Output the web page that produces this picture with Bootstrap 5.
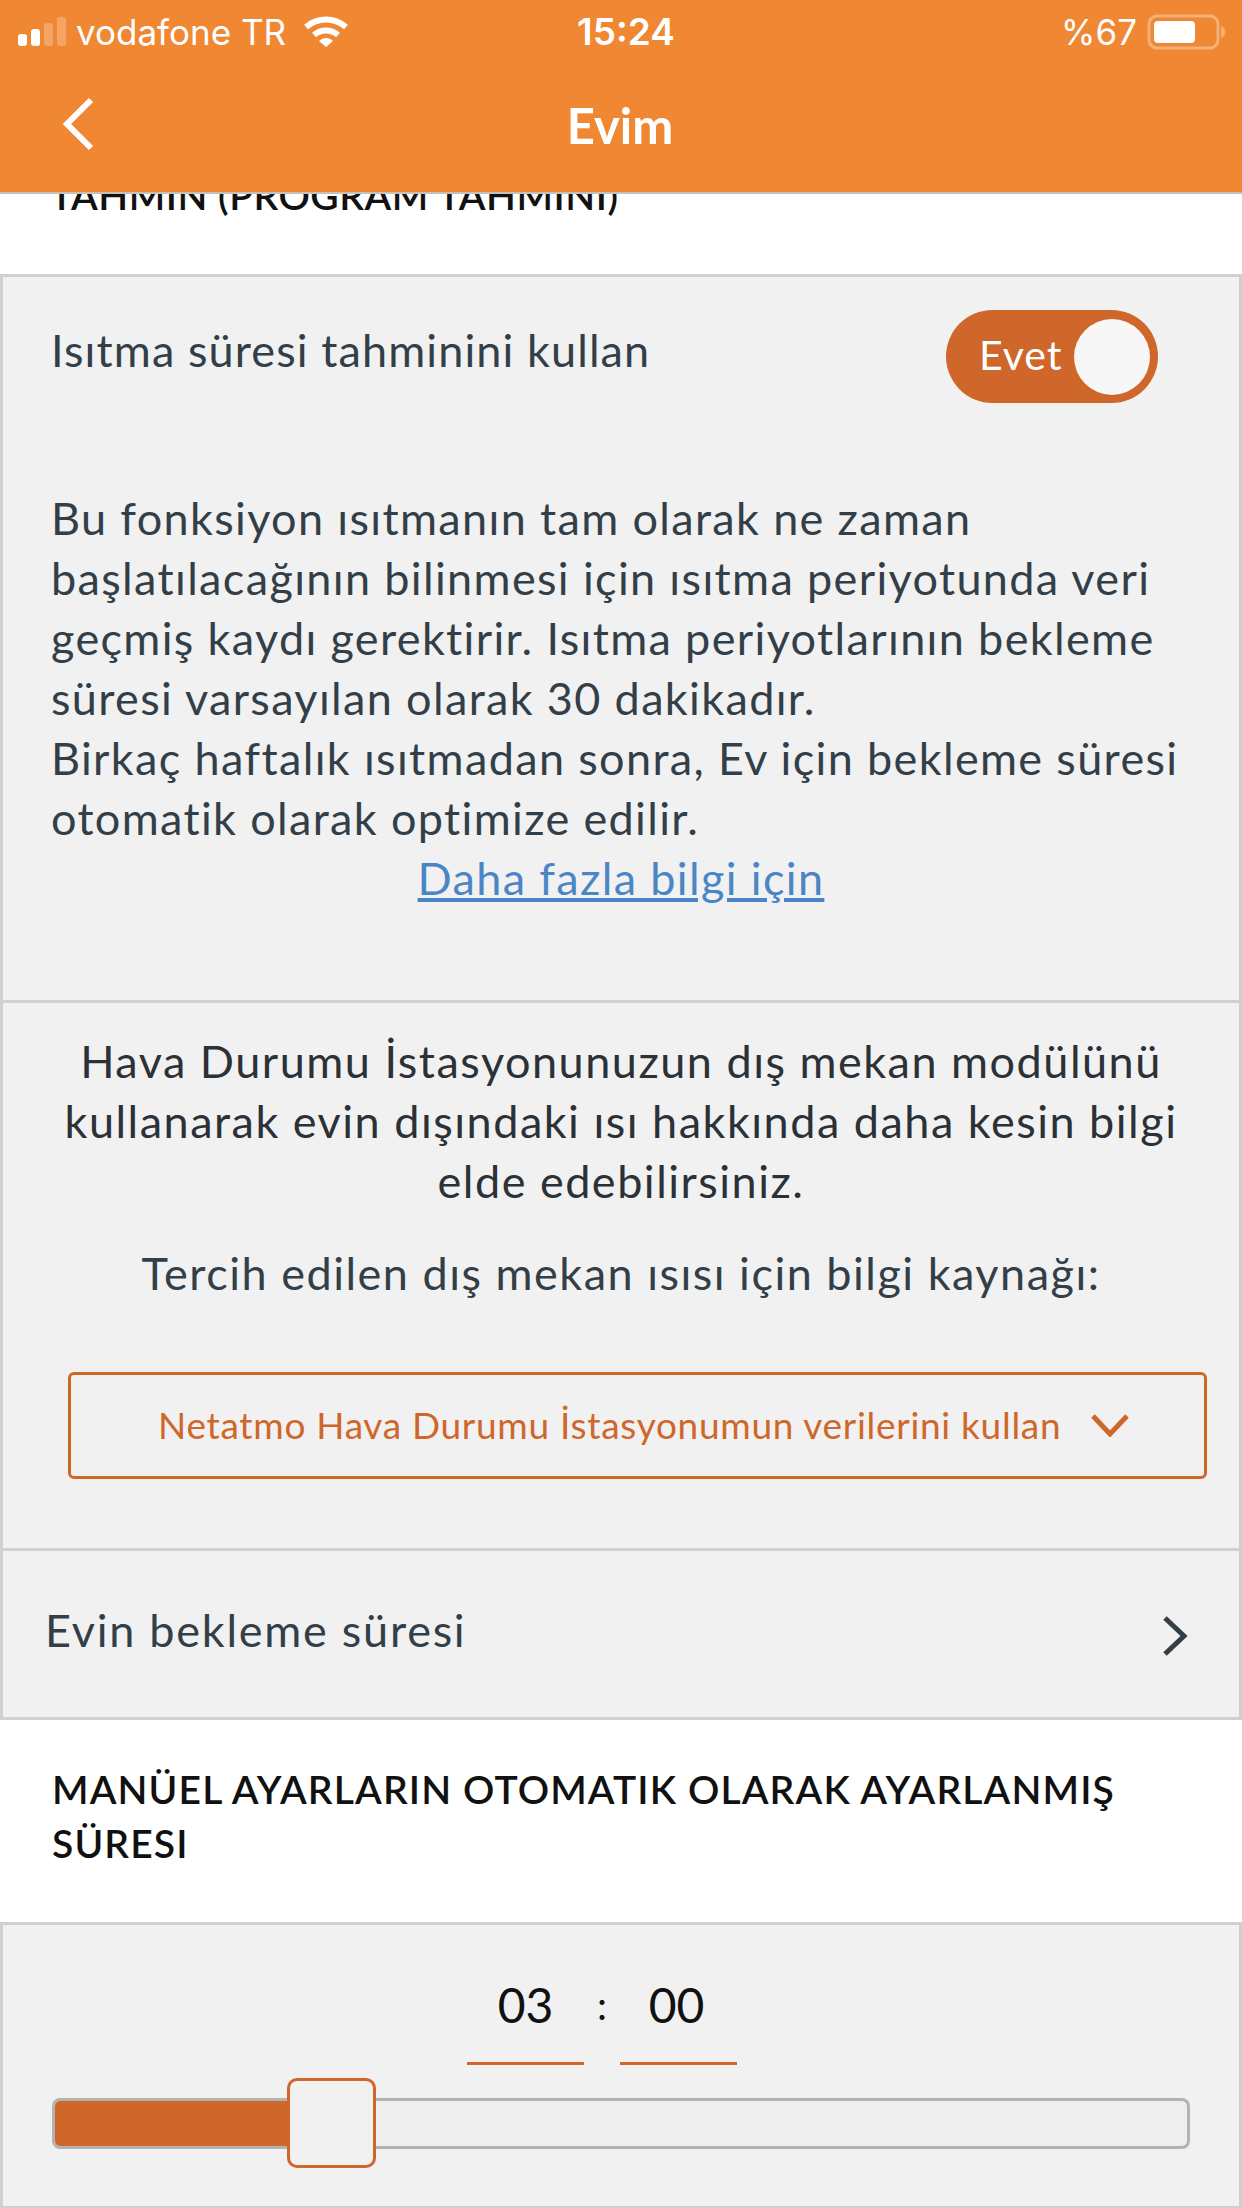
<!DOCTYPE html>
<html lang="tr">
<head>
  <meta charset="UTF-8">
  <title>Evim</title>
  <link href="https://cdn.jsdelivr.net/npm/bootstrap@5.3.2/dist/css/bootstrap.min.css" rel="stylesheet">
  <style>
    html, body { height: 2208px; overflow: hidden; }
    body { font-family: "Lato", "Liberation Sans", sans-serif; color: #333f48; background: #fff; }

    .app-top { position: relative; z-index: 2; height: 194px; background: #f08733; border-bottom: 2px solid #c4c0bc; color: #fff; }
    .status-row { height: 64px; padding: 0 15px 0 18px; font-family: "Inter", sans-serif; font-size: 35px; }
    .status-side { width: 500px; gap: 10px; }
    .status-clock { font-size: 37px; font-weight: 600; margin-left: 7px; }
    .title-row { height: 128px; padding: 0 0 8px 62px; }
    .title-text { position: absolute; left: 0; right: 2px; padding-top: 4px; text-align: center; font-size: 49px; font-weight: 700; }

    .cut-head { height: 104px; margin-top: -26px; margin-bottom: 2px; padding-left: 50px; font-size: 39px; letter-spacing: .5px; font-weight: 600; color: #111; line-height: 54px; }
    .section-head { height: 202px; padding: 42px 52px 0; font-size: 39px; letter-spacing: 1.12px; font-weight: 600; color: #111; line-height: 54px; }

    .panel-box { background: #f1f1f1; border: 3px solid #d0d0d0; font-size: 45px; letter-spacing: 1.35px; line-height: 60px; }
    .panel-first { height: 729px; padding: 0 48px; }
    .panel-second { height: 551px; margin-top: -3px; padding: 28px 0 0; letter-spacing: 1.5px; }
    .panel-third { height: 172px; margin-top: -3px; padding: 0 50px 0 42px; letter-spacing: 1.75px; }
    .panel-fourth { height: 287px; }

    .switch-row { height: 130px; padding-top: 33px; margin-bottom: 81px; padding-right: 33px; }
    .switch-label { padding-top: 10px; letter-spacing: 1.1px; }
    .switch-pill { width: 212px; height: 93px; border-radius: 47px; background: #d0672a; color: #fff; padding: 0 8px 0 33px; font-size: 41px; letter-spacing: 1px; }
    .switch-word { padding-bottom: 4px; }
    .switch-knob { width: 76px; height: 76px; border-radius: 50%; background: #f7f7f7; }
    .more-link { color: #4a86c5; }
    .dark-text { color: #2b3136; padding: 0 30px; }
    .source-label { margin-top: 32px; }

    .source-select { height: 107px; margin: 69px 32px 0 65px; border: 3px solid #d0672a; border-radius: 6px; color: #d0672a; font-size: 37px; letter-spacing: .7px; padding: 0 75px 2px 87px; }

    .time-row { height: 140px; padding: 48px 38px 0 0; font-size: 48px; letter-spacing: 0; line-height: 64px; color: #111; gap: 13px; }
    .time-cell { width: 117px; height: 92px; border-bottom: 3px solid #d0672a; text-align: center; }
    .time-cell-right { padding-right: 4px; }
    .time-sep { width: 10px; text-align: center; font-size: 40px; }

    .slide-wrap { position: relative; height: 51px; margin: 33px 49px 0; }
    .slide-track { height: 51px; border: 3px solid #b3b3b3; border-radius: 8px; background: #eee; overflow: hidden; }
    .slide-fill { height: 100%; background: #d0672a; }
    .slide-thumb { position: absolute; left: 235px; top: -20px; width: 89px; height: 90px; background: #f1f1f1; border: 3px solid #d0672a; border-radius: 10px; }
  </style>
</head>
<body>

<!-- Top bar -->
<div class="app-top">
  <div class="status-row d-flex align-items-center justify-content-between">
    <div class="status-side d-flex align-items-center">
      <svg width="48" height="30" viewBox="0 0 48 30">
        <rect x="0" y="17" width="9" height="12" rx="3" fill="#fff"/>
        <rect x="13" y="12" width="9" height="17" rx="3" fill="#fff"/>
        <rect x="26" y="6" width="9" height="23" rx="3" fill="#fff" fill-opacity=".25"/>
        <rect x="39" y="0" width="9" height="29" rx="3" fill="#fff" fill-opacity=".25"/>
      </svg>
      <span>vodafone TR</span>
      <svg class="ms-2" width="44" height="32" viewBox="0 0 44 32" fill="none" stroke="#fff" stroke-width="6">
        <path d="M2 11C14 1 30 1 42 11"/>
        <path d="M10 19C17 13 27 13 34 19"/>
        <path d="M15 25L22 31L29 25C25 21 19 21 15 25Z" fill="#fff" stroke="none"/>
      </svg>
    </div>
    <div class="status-clock">15:24</div>
    <div class="status-side d-flex align-items-center justify-content-end">
      <span>%67</span>
      <svg width="80" height="36" viewBox="0 0 80 36">
        <rect x="2" y="2" width="69" height="32" rx="8" fill="none" stroke="#fff" stroke-opacity=".35" stroke-width="3"/>
        <rect x="7" y="7" width="41" height="22" rx="4" fill="#fff"/>
        <path d="M74 12C77 13 78 15 78 18C78 21 77 23 74 24Z" fill="#fff" fill-opacity=".35"/>
      </svg>
    </div>
  </div>
  <div class="title-row d-flex align-items-center">
    <svg width="32" height="54" viewBox="0 0 32 54" fill="none" stroke="#fff" stroke-width="6"><path d="M29 3L5 27L29 51"/></svg>
    <div class="title-text">Evim</div>
  </div>
</div>

<div class="cut-head">TAHMIN (PROGRAM TAHMINI)</div>

<!-- Heating time estimate -->
<div class="panel-box panel-first">
  <div class="switch-row d-flex justify-content-between">
    <div class="switch-label">Isıtma süresi tahminini kullan</div>
    <div class="switch-pill d-flex align-items-center justify-content-between">
      <span class="switch-word">Evet</span>
      <span class="switch-knob"></span>
    </div>
  </div>
  <div>Bu fonksiyon ısıtmanın tam olarak ne zaman başlatılacağının bilinmesi için ısıtma periyotunda veri geçmiş kaydı gerektirir. Isıtma periyotlarının bekleme süresi varsayılan olarak 30 dakikadır.<br>Birkaç haftalık ısıtmadan sonra, Ev için bekleme süresi otomatik olarak optimize edilir.</div>
  <div class="text-center"><a class="more-link" href="#">Daha fazla bilgi için</a></div>
</div>

<!-- Outdoor source -->
<div class="panel-box panel-second text-center">
  <div class="dark-text">Hava Durumu İstasyonunuzun dış mekan modülünü kullanarak evin dışındaki ısı hakkında daha kesin bilgi elde edebilirsiniz.</div>
  <div class="source-label">Tercih edilen dış mekan ısısı için bilgi kaynağı:</div>
  <div class="source-select d-flex align-items-center justify-content-between">
    <span>Netatmo Hava Durumu İstasyonumun verilerini kullan</span>
    <svg width="38" height="24" viewBox="0 0 38 24" fill="none" stroke="#d0672a" stroke-width="5"><path d="M2 3L19 21L36 3"/></svg>
  </div>
</div>

<div class="panel-box panel-third d-flex align-items-center justify-content-between">
  <span class="pb-2">Evin bekleme süresi</span>
  <svg class="mt-1" width="28" height="40" viewBox="0 0 28 40" fill="none" stroke="#333f48" stroke-width="5"><path d="M4 2L23 20L4 38"/></svg>
</div>

<div class="section-head">MANÜEL AYARLARIN OTOMATIK OLARAK AYARLANMIŞ SÜRESI</div>

<!-- Duration slider -->
<div class="panel-box panel-fourth">
  <div class="time-row d-flex justify-content-center">
    <div class="time-cell">03</div>
    <div class="time-sep">:</div>
    <div class="time-cell time-cell-right">00</div>
  </div>
  <div class="slide-wrap">
    <div class="slide-track"><div class="slide-fill" style="width: 21%"></div></div>
    <div class="slide-thumb"></div>
  </div>
</div>

<script src="https://cdn.jsdelivr.net/npm/bootstrap@5.3.2/dist/js/bootstrap.bundle.min.js"></script>
</body>
</html>
